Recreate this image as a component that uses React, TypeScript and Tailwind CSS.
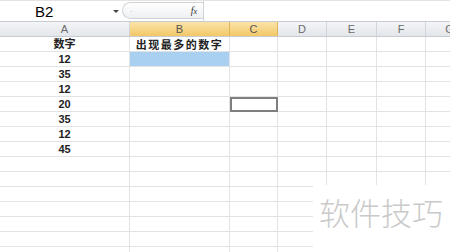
import React from "react";

const cols = ["A", "B", "C", "D", "E", "F", "G"];
const widths = ["w-[130px]", "w-[100px]", "w-[48px]", "w-[49px]", "w-[50px]", "w-[49px]", "w-[48px]"];
const colA = ["数字", "12", "35", "12", "20", "35", "12", "45"];

const App = () => {
	const rows = Array.from({ length: 15 }, (_, i) => i);
	return (
		<div className="relative w-[450px] h-[252px] overflow-hidden bg-white font-['Liberation_Sans','Noto_Sans_CJK_SC',sans-serif]">
			{/* formula bar */}
			<div className="flex h-[21px] border-t border-[#e4e4e4]">
				<div className="w-[122px] shrink-0 flex items-center relative">
					<span className="ml-[35px] text-[15px] leading-none text-black">B2</span>
					<span className="absolute left-[113px] top-[9px] w-0 h-0 border-l-[3px] border-r-[3px] border-t-[3px] border-l-transparent border-r-transparent border-t-[#444]"></span>
				</div>
				<div className="w-[81px] shrink-0 h-[17px] mt-[1px] rounded-l-full border border-r-0 border-[#cfd3d8] bg-gradient-to-b from-white to-[#eef0f3] flex items-center">
					<span className="ml-[7px] text-[8px] text-[#c8c8c8] leading-none">-</span>
					<span className="ml-auto mr-[6px] text-[10px] italic text-[#333] font-['Liberation_Serif',serif] leading-none">
						f<span className="text-[8px]">x</span>
					</span>
				</div>
				<div className="flex-1 border-l border-[#d0d4d9]"></div>
			</div>
			{/* column headers */}
			<div className="flex h-[16px] w-[480px] border-y border-[#c8ccd1] bg-gradient-to-b from-[#f4f5f7] to-[#e3e6ea]">
				{cols.map((c, i) => (
					<div
						key={c}
						className={`${widths[i]} shrink-0 flex items-center justify-center border-r text-[11px] leading-none text-[#6b6b6b] ${
							i === 1 || i === 2
								? "bg-gradient-to-b from-[#fbe3a8] to-[#f2c866] border-[#e0b35a] text-[#555]"
								: "border-[#d2d6db]"
						}`}
					>
						{c}
					</div>
				))}
			</div>
			{/* grid */}
			{rows.map((r) => (
				<div key={r} className="flex h-[15px] w-[480px]">
					{cols.map((c, i) => (
						<div
							key={c}
							className={`${widths[i]} shrink-0 flex items-center justify-center border-r border-b border-[#e2e3e5] ${
								r === 1 && i === 1 ? "bg-[#a9cff1]" : ""
							} ${r === 4 && i === 2 ? "!border-2 !border-[#7f7f7f]" : ""}`}
						>
							{i === 0 && colA[r] ? (
								<span className="text-[11px] font-bold text-[#222] leading-none">{colA[r]}</span>
							) : null}
							{i === 1 && r === 0 ? (
								<span className="text-[11px] font-bold text-[#222] leading-none tracking-[1.5px] font-['Noto_Sans_CJK_SC',sans-serif]">
									出现最多的数字
								</span>
							) : null}
						</div>
					))}
				</div>
			))}
			{/* watermark */}
			<div className="absolute left-[313px] top-[185px] right-0 bottom-0 bg-white flex items-start">
				<span className="ml-[6px] mt-[11px] text-[31px] leading-none text-[#cacaca] font-light font-['Noto_Sans_CJK_SC',sans-serif]">
					软件技巧
				</span>
			</div>
		</div>
	);
};

export default App;
